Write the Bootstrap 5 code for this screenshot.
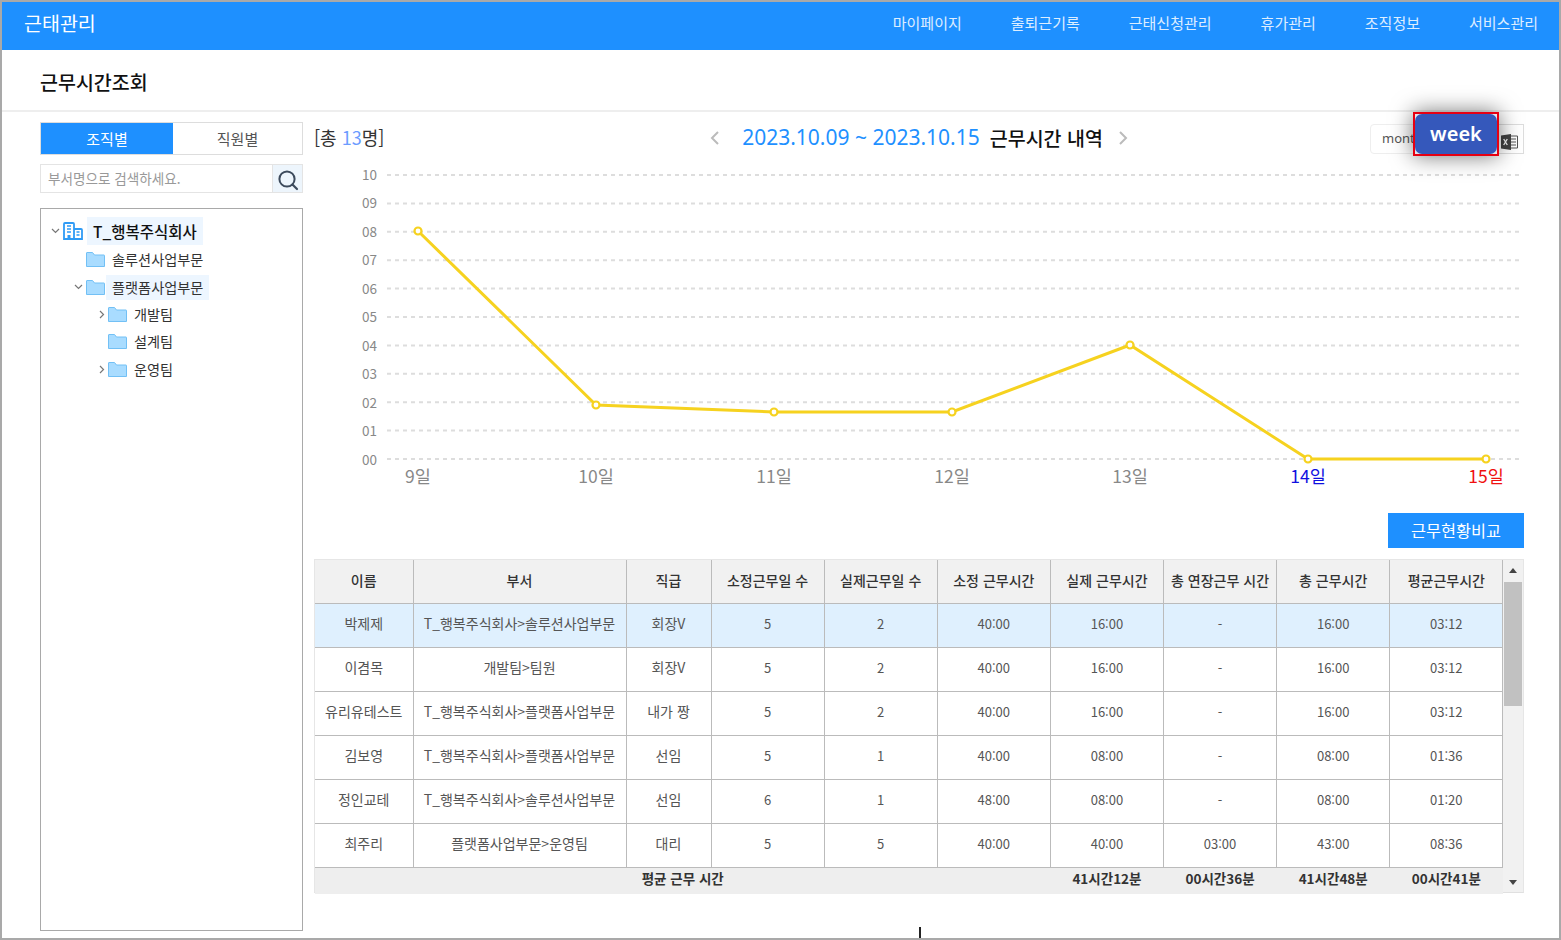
<!DOCTYPE html>
<html lang="ko">
<head>
<meta charset="utf-8">
<title>근무시간조회</title>
<link href="https://cdn.jsdelivr.net/npm/bootstrap@5.3.0/dist/css/bootstrap.min.css" rel="stylesheet">
<style>
html,body{height:940px;overflow:hidden;background:#fff}
body{font-family:"Noto Sans CJK KR","Noto Sans",sans-serif;color:#333}
.frame{width:1561px;height:940px;border:2px solid #a9a9a9;position:relative;overflow:hidden}
.topbar{height:48px;background:#1e90ff;padding:0 21px 0 22px}
.brand-txt{font-size:19.5px;color:#fff;line-height:42px}
.menu-gap{gap:49px}
.menu-gap a{font-size:15px;color:#fff;opacity:.85;text-decoration:none;line-height:42px}
.titlebar{height:62px;border-bottom:2px solid #eee;padding:3px 0 0 38px}
.titlebar h1{font-size:19.5px;font-weight:500;color:#111;margin:0}
.content{padding:10px 35px 0 38px;gap:11px}
.side{width:263px;flex:none}
.tabs-wrap{height:33px;border:1px solid #ddd}
.tab-item{font-size:15px;line-height:30px;border:0;background:#fff;color:#555;border-radius:0;padding:0}
.tab-on{background:#1e90ff;color:#fff;width:132px}
.tab-off{flex:1}
.searchbox{height:29px;margin-top:9px;border:1px solid #e4e4e4}
.searchbox input{flex:1;min-width:0;border:0;outline:0;font-size:13.6px;padding:0 7px 2px;color:#777;font-family:inherit;height:27px}
.searchbox input::placeholder{color:#999}
.search-btn{width:30px;height:27px;background:#edf5fc;border:0;border-left:1px solid #e4e4e4;padding:0}
.treebox{margin-top:15px;height:723px;border:1px solid #a9a9a9;padding:7px 0 0 0}
.tree-row{height:27.4px;font-size:14.2px;color:#333}
.tree-top{height:30px;font-size:15.5px;font-weight:500;color:#111}
.tree-lbl{background:transparent;padding:0 6px;line-height:25px}
.tree-sel{background:#edf6ff}
.tree-top .tree-lbl{line-height:28px}
.ind0{padding-left:8px}.ind1{padding-left:31px}.ind2{padding-left:54px}
.arrow{width:13px;flex:none;display:flex;justify-content:center}
.ico-gap{margin-right:1px}
.ind1 .ico-gap{margin-left:1px}
.bld-ico{margin:0 4px 0 1px}
.mainpane{width:1210px;flex:none;position:relative}
.headrow{height:31px}
.total-txt{font-size:18px;color:#333;width:300px;padding-bottom:1px}
.total-txt b{font-weight:400;color:#6c9cff}
.period{font-size:19.5px;font-weight:500;color:#111;gap:10px}
.period span.dates{font-family:"Noto Sans",sans-serif;font-weight:400;color:#1e90ff;font-size:21px}
.chev-l{margin:0 11px 0 0}
.chev-r{margin:0 0 0 4px}
.toolset{width:300px;margin-top:3px}
.month-btn{width:46px;height:30px;border:1px solid #eee;border-radius:4px 0 0 4px;background:#fff;font-size:13px;color:#555;overflow:hidden;padding:0 0 0 11px;text-align:left;white-space:nowrap;font-family:"Noto Sans",sans-serif}
.xl-btn{width:25px;height:30px;border:1px solid #ddd;border-left:0;background:#fff;padding:0 4px 0 0;margin-left:83px}
.week-over{position:absolute;left:1099px;top:-10px;width:86px;height:44px;border:2px solid #e60012;background:#dfe3ee;border-radius:0;box-shadow:0 0 22px rgba(0,0,0,.55);padding:0}
.week-inner{display:block;height:100%;color:#fff;font-family:"Noto Sans",sans-serif;font-size:20px;font-weight:600;line-height:39px;background:#3558bb;border-radius:7px}
.chart-svg{display:block;margin-top:7px}
.chart-svg text{font-family:"Noto Sans CJK KR","Noto Sans",sans-serif}
.cmp-row{margin-top:13px}
.cmp-btn{width:136px;height:35px;background:#1e90ff;color:#fff;border:0;border-radius:0;font-size:16.3px;padding:0}
.grid-wrap{margin-top:11px;height:334px;width:1210px;background:#eee;border:1px solid #e6e6e6;border-bottom:1px solid #e0e0e0;position:relative}
.grid-tbl{width:1188px;table-layout:fixed;border-collapse:collapse;margin:0;font-size:14px;color:#555;background:#fff}
.grid-tbl th,.grid-tbl td{border:1px solid #bbb;text-align:center;vertical-align:middle;padding:0;white-space:nowrap;box-shadow:none}
.grid-tbl thead th{background:#f1f1f1;height:43px;font-weight:500;color:#333;font-size:14px;border-top:0;padding-bottom:1px}
.grid-tbl tbody td{height:44px;background:#fff;color:#555;padding-bottom:3px}
.grid-tbl tbody td:nth-child(n+4){font-size:13px}
.grid-tbl tbody tr.row-sel td{background:#dff0fe}
.grid-tbl tfoot td{height:27px;background:#eee;font-weight:700;border:0;color:#333;font-size:13.5px;border-top:1px solid #bbb;padding-bottom:5px}
.grid-tbl th:first-child,.grid-tbl td:first-child{border-left:0}
.c1{width:98px}.c2{width:213px}.c3{width:85px}.c4,.c5,.c6,.c7,.c8,.c9,.c10{width:113.14px}
.sbar{width:20px;flex:none;position:relative;background:#f1f1f1}
.sbar-up,.sbar-down{position:absolute;left:6px;width:0;height:0;border-left:4px solid transparent;border-right:4px solid transparent}
.sbar-up{top:8px;border-bottom:5px solid #444}
.sbar-down{bottom:7px;border-top:5px solid #444}
.sbar-thumb{position:absolute;left:1px;right:1px;top:22px;height:124px;background:#c1c1c1}
.caret-mark{position:absolute;left:917px;top:925px;width:2px;height:11px;background:#222}
</style>
</head>
<body class="m-0">
<div class="frame d-flex flex-column">
  <header class="topbar d-flex justify-content-between align-items-start flex-none">
    <div class="brand-txt">근태관리</div>
    <nav class="d-flex menu-gap">
      <a href="#">마이페이지</a><a href="#">출퇴근기록</a><a href="#">근태신청관리</a><a href="#">휴가관리</a><a href="#">조직정보</a><a href="#">서비스관리</a>
    </nav>
  </header>
  <div class="titlebar d-flex align-items-center"><h1>근무시간조회</h1></div>
  <div class="content d-flex">
    <aside class="side">
      <div class="tabs-wrap d-flex">
        <button class="btn tab-item tab-on">조직별</button>
        <button class="btn tab-item tab-off">직원별</button>
      </div>
      <div class="searchbox d-flex">
        <input type="text" placeholder="부서명으로 검색하세요.">
        <button class="search-btn" aria-label="검색"><svg width="24" height="24" viewBox="0 0 24 24"><circle cx="11" cy="11" r="7.6" fill="none" stroke="#3c4a5c" stroke-width="2"/><path d="M16.5 16.5l4.5 4.5" stroke="#3c4a5c" stroke-width="2.2" stroke-linecap="round"/></svg></button>
      </div>
      <div class="treebox">
        <div class="tree-top d-flex align-items-center ind0">
          <span class="arrow"><svg width="9" height="6" viewBox="0 0 9 6"><path d="M1 1l3.5 3.5L8 1" fill="none" stroke="#777" stroke-width="1.2"/></svg></span>
          <svg class="bld-ico" width="20" height="18" viewBox="0 0 20 18"><path d="M1 17V2q0-1 1-1h8q1 0 1 1v15zM11 7h7q1 0 1 1v9h-8z" fill="#fff" stroke="#2f9bf5" stroke-width="1.8"/><path d="M4 4h4M4 7h4M4 10h4M13.5 10h3M13.5 13h3" stroke="#2f9bf5" stroke-width="1.4"/><path d="M4.5 17v-4h3v4" fill="#2f9bf5"/></svg>
          <span class="tree-lbl tree-sel">T_행복주식회사</span>
        </div>
        <div class="tree-row d-flex align-items-center ind1">
          <span class="arrow"></span>
          <svg class="ico-gap" width="19" height="15" viewBox="0 0 19 15"><path d="M.5 14.5V1q0-.5.5-.5h5.5l2 2.5H18q.5 0 .5.5v11z" fill="#a9dcff" stroke="#72c0f5"/></svg>
          <span class="tree-lbl">솔루션사업부문</span>
        </div>
        <div class="tree-row d-flex align-items-center ind1">
          <span class="arrow"><svg width="9" height="6" viewBox="0 0 9 6"><path d="M1 1l3.5 3.5L8 1" fill="none" stroke="#777" stroke-width="1.2"/></svg></span>
          <svg class="ico-gap" width="19" height="15" viewBox="0 0 19 15"><path d="M.5 14.5V1q0-.5.5-.5h5.5l2 2.5H18q.5 0 .5.5v11z" fill="#a9dcff" stroke="#72c0f5"/></svg>
          <span class="tree-lbl tree-sel">플랫폼사업부문</span>
        </div>
        <div class="tree-row d-flex align-items-center ind2">
          <span class="arrow"><svg width="6" height="9" viewBox="0 0 6 9"><path d="M1 1l3.5 3.5L1 8" fill="none" stroke="#777" stroke-width="1.2"/></svg></span>
          <svg class="ico-gap" width="19" height="15" viewBox="0 0 19 15"><path d="M.5 14.5V1q0-.5.5-.5h5.5l2 2.5H18q.5 0 .5.5v11z" fill="#a9dcff" stroke="#72c0f5"/></svg>
          <span class="tree-lbl">개발팀</span>
        </div>
        <div class="tree-row d-flex align-items-center ind2">
          <span class="arrow"></span>
          <svg class="ico-gap" width="19" height="15" viewBox="0 0 19 15"><path d="M.5 14.5V1q0-.5.5-.5h5.5l2 2.5H18q.5 0 .5.5v11z" fill="#a9dcff" stroke="#72c0f5"/></svg>
          <span class="tree-lbl">설계팀</span>
        </div>
        <div class="tree-row d-flex align-items-center ind2">
          <span class="arrow"><svg width="6" height="9" viewBox="0 0 6 9"><path d="M1 1l3.5 3.5L1 8" fill="none" stroke="#777" stroke-width="1.2"/></svg></span>
          <svg class="ico-gap" width="19" height="15" viewBox="0 0 19 15"><path d="M.5 14.5V1q0-.5.5-.5h5.5l2 2.5H18q.5 0 .5.5v11z" fill="#a9dcff" stroke="#72c0f5"/></svg>
          <span class="tree-lbl">운영팀</span>
        </div>
      </div>
    </aside>
    <main class="mainpane">
      <div class="headrow d-flex justify-content-between align-items-center">
        <div class="total-txt">[총 <b>13</b>명]</div>
        <div class="period d-flex align-items-center">
          <svg class="chev-l" width="12" height="16" viewBox="0 0 12 16"><path d="M9 2L3 8l6 6" fill="none" stroke="#bbb" stroke-width="2"/></svg>
          <span class="dates">2023.10.09 ~ 2023.10.15</span>
          <span>근무시간 내역</span>
          <svg class="chev-r" width="12" height="16" viewBox="0 0 12 16"><path d="M3 2l6 6-6 6" fill="none" stroke="#bbb" stroke-width="2"/></svg>
        </div>
        <div class="toolset d-flex justify-content-end">
          <button class="month-btn">month</button>
          <button class="xl-btn" aria-label="엑셀"><svg width="19" height="18" viewBox="0 0 19 18"><path d="M9 3h8.5v12H9" fill="#fff" stroke="#555"/><path d="M11 6h5M11 9h5M11 12h5" stroke="#555"/><path d="M1 2.5L11 1v16L1 15.5z" fill="#444"/><path d="M3.7 6l3.6 6M7.3 6l-3.6 6" stroke="#fff" stroke-width="1.3"/></svg></button>
        </div>
      </div>
      <button class="week-over"><span class="week-inner">week</span></button>
      <svg class="chart-svg" width="1210" height="340" viewBox="314 160 1210 340">
        <g stroke="#ddd" stroke-width="2" stroke-dasharray="4 4">
          <path d="M387 175H1520M387 203.4H1520M387 231.8H1520M387 260.2H1520M387 288.6H1520M387 317H1520M387 345.4H1520M387 373.8H1520M387 402.2H1520M387 430.6H1520M387 459H1520"/>
        </g>
        <g font-size="13.5" fill="#888" text-anchor="end">
          <text x="377" y="180">10</text><text x="377" y="208">09</text><text x="377" y="237">08</text><text x="377" y="265">07</text><text x="377" y="294">06</text><text x="377" y="322">05</text><text x="377" y="351">04</text><text x="377" y="379">03</text><text x="377" y="408">02</text><text x="377" y="436">01</text><text x="377" y="465">00</text>
        </g>
        <polyline points="418,231 596,405 774,412 952,412 1130,345 1308,459 1486,459" fill="none" stroke="#f6d21f" stroke-width="3"/>
        <g fill="#fff" stroke="#f6d21f" stroke-width="2.2">
          <circle cx="418" cy="231" r="3.5"/><circle cx="596" cy="405" r="3.5"/><circle cx="774" cy="412" r="3.5"/><circle cx="952" cy="412" r="3.5"/><circle cx="1130" cy="345" r="3.5"/><circle cx="1308" cy="459" r="3.5"/><circle cx="1486" cy="459" r="3.5"/>
        </g>
        <g font-size="17.5" fill="#888" text-anchor="middle">
          <text x="418" y="483">9일</text><text x="596" y="483">10일</text><text x="774" y="483">11일</text><text x="952" y="483">12일</text><text x="1130" y="483">13일</text><text x="1308" y="483" fill="#1010e0">14일</text><text x="1486" y="483" fill="#f01010">15일</text>
        </g>
      </svg>
      <div class="cmp-row d-flex justify-content-end"><button class="btn cmp-btn">근무현황비교</button></div>
      <div class="grid-wrap d-flex">
        <table class="table grid-tbl">
          <colgroup><col class="c1"><col class="c2"><col class="c3"><col class="c4"><col class="c5"><col class="c6"><col class="c7"><col class="c8"><col class="c9"><col class="c10"></colgroup>
          <thead><tr><th>이름</th><th>부서</th><th>직급</th><th>소정근무일 수</th><th>실제근무일 수</th><th>소정 근무시간</th><th>실제 근무시간</th><th>총 연장근무 시간</th><th>총 근무시간</th><th>평균근무시간</th></tr></thead>
          <tbody>
            <tr class="row-sel"><td>박제제</td><td>T_행복주식회사&gt;솔루션사업부문</td><td>회장V</td><td>5</td><td>2</td><td>40:00</td><td>16:00</td><td>-</td><td>16:00</td><td>03:12</td></tr>
            <tr><td>이겸목</td><td>개발팀&gt;팀원</td><td>회장V</td><td>5</td><td>2</td><td>40:00</td><td>16:00</td><td>-</td><td>16:00</td><td>03:12</td></tr>
            <tr><td>유리유테스트</td><td>T_행복주식회사&gt;플랫폼사업부문</td><td>내가 짱</td><td>5</td><td>2</td><td>40:00</td><td>16:00</td><td>-</td><td>16:00</td><td>03:12</td></tr>
            <tr><td>김보영</td><td>T_행복주식회사&gt;플랫폼사업부문</td><td>선임</td><td>5</td><td>1</td><td>40:00</td><td>08:00</td><td>-</td><td>08:00</td><td>01:36</td></tr>
            <tr><td>정인교테</td><td>T_행복주식회사&gt;솔루션사업부문</td><td>선임</td><td>6</td><td>1</td><td>48:00</td><td>08:00</td><td>-</td><td>08:00</td><td>01:20</td></tr>
            <tr><td>최주리</td><td>플랫폼사업부문&gt;운영팀</td><td>대리</td><td>5</td><td>5</td><td>40:00</td><td>40:00</td><td>03:00</td><td>43:00</td><td>08:36</td></tr>
          </tbody>
          <tfoot><tr><td colspan="6">평균 근무 시간</td><td>41시간12분</td><td>00시간36분</td><td>41시간48분</td><td>00시간41분</td></tr></tfoot>
        </table>
        <div class="sbar"><span class="sbar-up"></span><span class="sbar-thumb"></span><span class="sbar-down"></span></div>
      </div>
    </main>
  </div>
  <span class="caret-mark"></span>
</div>
<script src="https://cdn.jsdelivr.net/npm/bootstrap@5.3.0/dist/js/bootstrap.bundle.min.js"></script>
</body>
</html>
